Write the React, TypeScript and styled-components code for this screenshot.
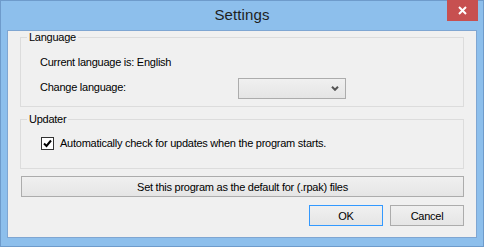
import styled, { createGlobalStyle } from "styled-components";

const GlobalStyle = createGlobalStyle`
  html, body {
    margin: 0;
    padding: 0;
    background: #8dbfec;
  }
  body {
    font-family: "Liberation Sans", Arial, sans-serif;
    font-size: 11px;
    color: #000;
  }
`;

const Window = styled.div`
  box-sizing: border-box;
  width: 484px;
  height: 247px;
  border: 1px solid #6e9bcb;
  background: #8dbfec;
  display: flex;
  flex-direction: column;
`;

const TitleBar = styled.div`
  height: 29px;
  display: grid;
  grid-template-columns: 1fr auto 1fr;
  align-items: start;
`;

const Title = styled.div`
  grid-column: 2;
  font-size: 15px;
  line-height: 28px;
  color: #1e1e1e;
  letter-spacing: 0.1px;
`;

const CloseButton = styled.button`
  grid-column: 3;
  justify-self: end;
  margin: -1px 5px 0 0;
  width: 31px;
  height: 21px;
  border: none;
  padding: 0;
  background: #c75050;
  display: flex;
  align-items: center;
  justify-content: center;
`;

const Client = styled.div`
  flex: 1;
  margin: 0 6px 8px 6px;
  border: 1px solid #7fa6d2;
  background: #f0f0f0;
  display: flex;
  flex-direction: column;
  padding-bottom: 11px;
  letter-spacing: -0.25px;
`;

const Group = styled.fieldset<{ $gap?: number }>`
  margin: ${(p) => p.$gap ?? 0}px 12px 0 12px;
  padding: 0;
  border: 1px solid #dcdcdc;
  min-width: 0;
`;

const Legend = styled.legend`
  margin-left: 6px;
  padding: 0 2px;
  line-height: 13px;
`;

const GroupBody = styled.div<{ $top: number; $bottom: number }>`
  padding: ${(p) => p.$top}px 0 ${(p) => p.$bottom}px 19px;
  display: flex;
  flex-direction: column;
  gap: 9px;
`;

const TextRow = styled.div`
  line-height: 13px;
`;

const FieldRow = styled.div`
  display: grid;
  grid-template-columns: 198px 108px;
  align-items: center;
`;

const FieldLabel = styled.span`
  line-height: 13px;
  margin-top: -3px;
`;

const Select = styled.div`
  box-sizing: border-box;
  height: 21px;
  border: 1px solid #acacac;
  background: linear-gradient(#f0f0f0, #e5e5e5);
  display: flex;
  align-items: center;
  justify-content: flex-end;
  padding-right: 6px;
`;

const CheckRow = styled.label`
  display: flex;
  align-items: center;
  gap: 6px;
  line-height: 13px;
  margin-left: 1px;
`;

const CheckBox = styled.span`
  box-sizing: border-box;
  width: 13px;
  height: 13px;
  border: 1px solid #333;
  background: #fff;
  display: flex;
  align-items: center;
  justify-content: center;
`;

const Button = styled.button<{ $primary?: boolean }>`
  box-sizing: border-box;
  height: 21px;
  padding: 0;
  border: 1px solid ${(p) => (p.$primary ? "#3399ff" : "#acacac")};
  background: linear-gradient(#f0f0f0, #e5e5e5);
  font-family: inherit;
  font-size: 11px;
  letter-spacing: -0.25px;
  color: #000;
`;

const WideButton = styled(Button)`
  margin: 7px 12px 0 13px;
`;

const ButtonRow = styled.div`
  margin: 8px 12px 0 0;
  display: flex;
  justify-content: flex-end;
  gap: 7px;
`;

const DialogButton = styled(Button)`
  width: 74px;
`;

export default function App() {
  return (
    <>
      <GlobalStyle />
      <Window>
        <TitleBar>
          <Title>Settings</Title>
          <CloseButton aria-label="Close">
            <svg width="9" height="9" viewBox="0 0 9 9">
              <path d="M1 1 L8 8 M8 1 L1 8" stroke="#fff" strokeWidth="2" />
            </svg>
          </CloseButton>
        </TitleBar>
        <Client>
          <Group>
            <Legend>Language</Legend>
            <GroupBody $top={12} $bottom={7}>
              <TextRow>Current language is: English</TextRow>
              <FieldRow>
                <FieldLabel>Change language:</FieldLabel>
                <Select>
                  <svg width="8" height="5" viewBox="0 0 8 5">
                    <path d="M1 0.8 L4 3.8 L7 0.8" fill="none" stroke="#555" strokeWidth="2" />
                  </svg>
                </Select>
              </FieldRow>
            </GroupBody>
          </Group>
          <Group $gap={6}>
            <Legend>Updater</Legend>
            <GroupBody $top={11} $bottom={18}>
              <CheckRow>
                <CheckBox>
                  <svg width="9" height="9" viewBox="0 0 9 9">
                    <path d="M1 4.5 L3.5 7 L8 1.5" fill="none" stroke="#000" strokeWidth="2" />
                  </svg>
                </CheckBox>
                Automatically check for updates when the program starts.
              </CheckRow>
            </GroupBody>
          </Group>
          <WideButton>Set this program as the default for (.rpak) files</WideButton>
          <ButtonRow>
            <DialogButton $primary>OK</DialogButton>
            <DialogButton>Cancel</DialogButton>
          </ButtonRow>
        </Client>
      </Window>
    </>
  );
}
